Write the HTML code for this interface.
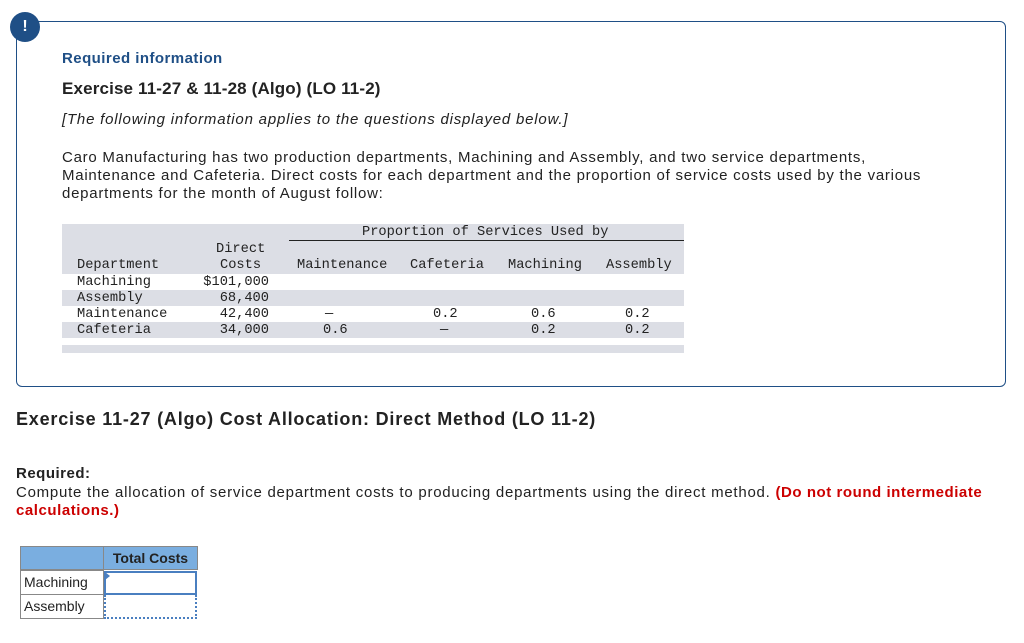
<!DOCTYPE html>
<html><head><meta charset="utf-8"><style>
body{margin:0;width:1024px;height:643px;background:#fff;position:relative;font-family:"Liberation Sans",sans-serif;color:#222;overflow:hidden}
.a{position:absolute;white-space:nowrap}
.m{font-family:"Liberation Mono",monospace;font-size:13.7px;color:#222}
.box{position:absolute;left:16px;top:21px;width:990px;height:366px;border:1.5px solid #1f4f86;border-radius:6px;box-sizing:border-box}
.bg{position:absolute;left:62px;width:622px;background:#dcdee5}
</style></head><body>
<div class="box"></div>
<div class="a" style="left:10px;top:12px;width:30px;height:30px;border-radius:50%;background:#1f4f86;color:#fff;font-weight:bold;font-size:16px;text-align:center;line-height:30px">!</div>
<div class="a" style="left:62px;top:50px;font-size:15px;font-weight:bold;color:#1f4f86;letter-spacing:0.45px">Required information</div>
<div class="a" style="left:62px;top:79px;font-size:17px;font-weight:bold;color:#222;letter-spacing:0.15px">Exercise 11-27 &amp; 11-28 (Algo) (LO 11-2)</div>
<div class="a" style="left:62px;top:111px;font-size:15px;font-style:italic;color:#222;letter-spacing:0.8px">[The following information applies to the questions displayed below.]</div>
<div class="a" style="left:62px;top:149px;font-size:15px;line-height:18px;color:#222;letter-spacing:0.75px">Caro Manufacturing has two production departments, Machining and Assembly, and two service departments,<br>Maintenance and Cafeteria. Direct costs for each department and the proportion of service costs used by the various<br>departments for the month of August follow:</div>
<div class="bg" style="top:224px;height:50px"></div>
<div class="bg" style="top:290px;height:16px"></div>
<div class="bg" style="top:322px;height:16px"></div>
<div class="bg" style="top:345px;height:8px"></div>
<div class="a" style="left:289px;top:240px;width:395px;height:1px;background:#222"></div>
<div class="a m" style="left:362px;top:225px">Proportion of Services Used by</div>
<div class="a m" style="left:216px;top:242px">Direct</div>
<div class="a m" style="left:77px;top:258px">Department</div>
<div class="a m" style="left:220px;top:258px">Costs</div>
<div class="a m" style="left:297px;top:258px">Maintenance</div>
<div class="a m" style="left:410px;top:258px">Cafeteria</div>
<div class="a m" style="left:508px;top:258px">Machining</div>
<div class="a m" style="left:606px;top:258px">Assembly</div>
<div class="a m" style="left:77px;top:275px">Machining</div>
<div class="a m" style="left:77px;top:291px">Assembly</div>
<div class="a m" style="left:77px;top:307px">Maintenance</div>
<div class="a m" style="left:77px;top:323px">Cafeteria</div>
<div class="a m" style="left:180px;top:275px;width:89px;text-align:right">$101,000</div>
<div class="a m" style="left:180px;top:291px;width:89px;text-align:right">68,400</div>
<div class="a m" style="left:180px;top:307px;width:89px;text-align:right">42,400</div>
<div class="a m" style="left:180px;top:323px;width:89px;text-align:right">34,000</div>
<div class="a m" style="left:325px;top:307px">—</div>
<div class="a m" style="left:433px;top:307px">0.2</div>
<div class="a m" style="left:531px;top:307px">0.6</div>
<div class="a m" style="left:625px;top:307px">0.2</div>
<div class="a m" style="left:323px;top:323px">0.6</div>
<div class="a m" style="left:440px;top:323px">—</div>
<div class="a m" style="left:531px;top:323px">0.2</div>
<div class="a m" style="left:625px;top:323px">0.2</div>
<div class="a" style="left:16px;top:409px;font-size:18px;font-weight:bold;color:#222;letter-spacing:0.8px">Exercise 11-27 (Algo) Cost Allocation: Direct Method (LO 11-2)</div>
<div class="a" style="left:16px;top:465px;font-size:15px;font-weight:bold;letter-spacing:0.5px">Required:</div>
<div class="a" style="left:16px;top:484px;font-size:15px;line-height:18px;white-space:normal;width:990px;letter-spacing:0.75px">Compute the allocation of service department costs to producing departments using the direct method. <b style="color:#c00;letter-spacing:0.55px">(Do not round intermediate calculations.)</b></div>
<div class="a" style="left:20px;top:546px;width:84px;height:24px;background:#7aaee0;border:1px solid #888;box-sizing:border-box"></div>
<div class="a" style="left:103px;top:546px;width:95px;height:24px;background:#7aaee0;border:1px solid #888;box-sizing:border-box;font-size:14px;font-weight:bold;text-align:center;line-height:22px">Total Costs</div>
<div class="a" style="left:20px;top:570px;width:84px;height:25px;border:1px solid #888;box-sizing:border-box;font-size:14px;line-height:23px;padding-left:3px">Machining</div>
<div class="a" style="left:20px;top:594px;width:84px;height:25px;border:1px solid #888;box-sizing:border-box;font-size:14px;line-height:23px;padding-left:3px">Assembly</div>
<div class="a" style="left:104px;top:571px;width:93px;height:24px;border:2px solid #4a7fc0;box-sizing:border-box"></div>
<div class="a" style="left:105px;top:572px;width:0;height:0;border-left:5px solid #4a7fc0;border-top:4px solid transparent;border-bottom:4px solid transparent"></div>
<div class="a" style="left:104px;top:595px;width:93px;height:24px;border:2px dotted #4a7fc0;border-top:none;box-sizing:border-box"></div>
</body></html>
